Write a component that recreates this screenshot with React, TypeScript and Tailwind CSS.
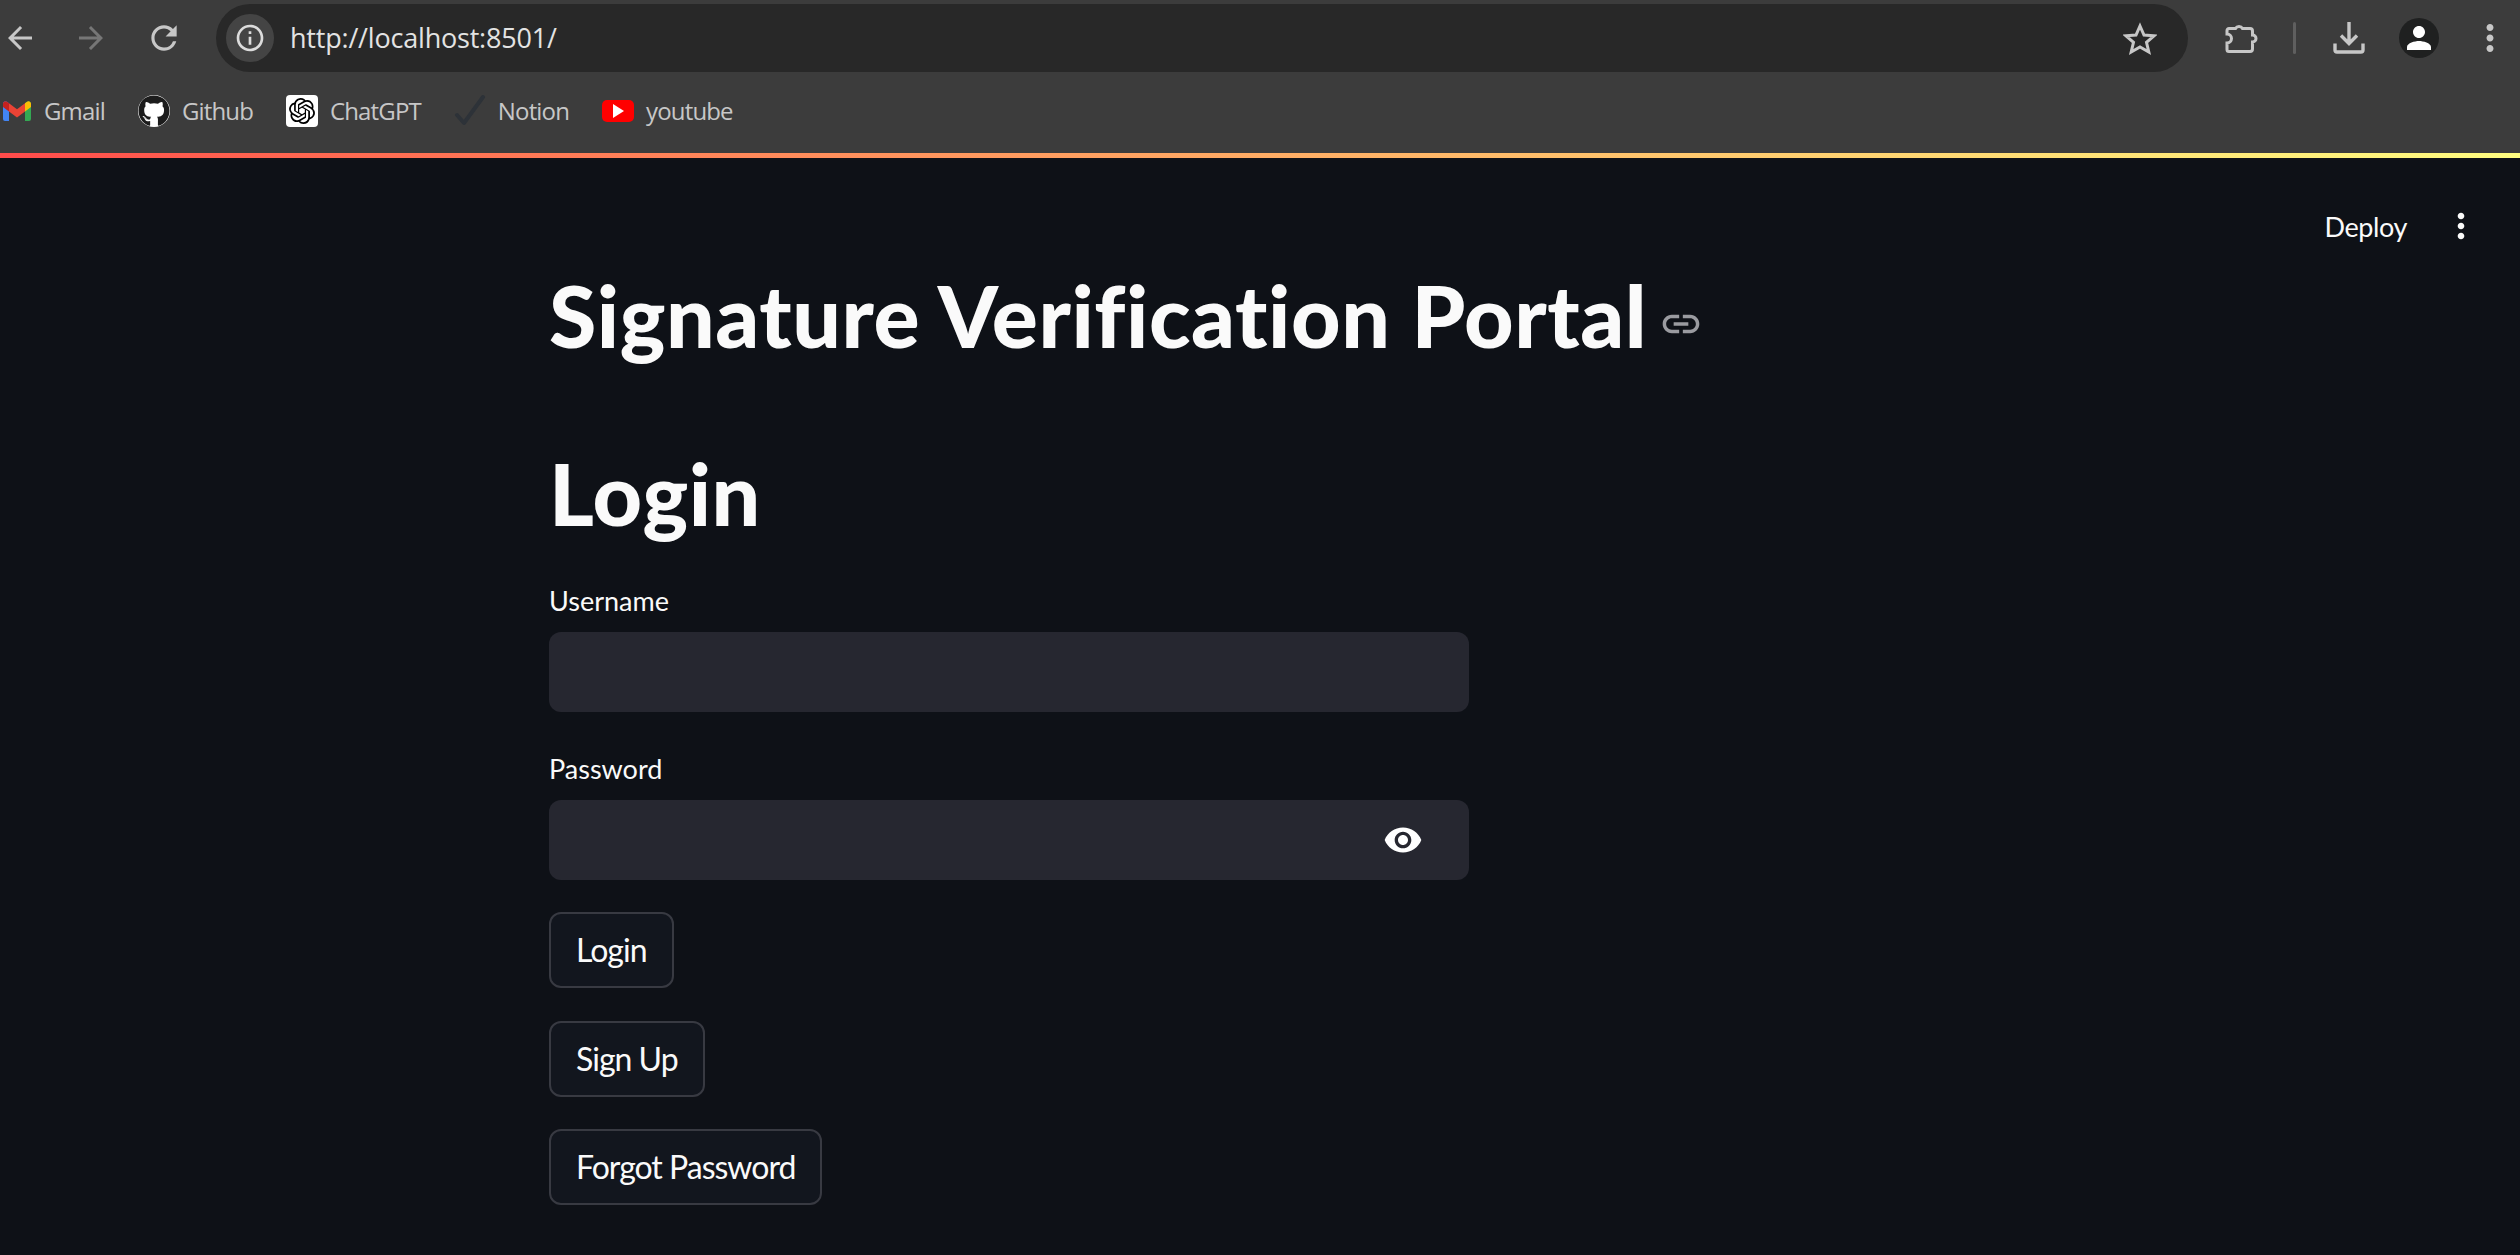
import React from "react";
import { MdArrowBack, MdArrowForward, MdRefresh, MdInfoOutline, MdPerson, MdMoreVert, MdVisibility, MdLink } from "react-icons/md";
import { FaGithub } from "react-icons/fa";
import { SiOpenai } from "react-icons/si";

const Gmail = () => (
  <svg width="30" height="22" viewBox="0 0 30 22" className="shrink-0">
    <path d="M1 21V3.5C1 1.5 3.5.4 5 1.7L7 3.3V21H3a2 2 0 0 1-2-2z" fill="#4285f4" />
    <path d="M23 21V3.3l2-1.6C26.5.4 29 1.5 29 3.5V19a2 2 0 0 1-2 2z" fill="#34a853" />
    <path d="M23 3.3 25 1.7C26.5.4 29 1.5 29 3.5V7l-6 4.5z" fill="#fbbc04" />
    <path d="M7 11.5V3.3L15 9.3l8-6v8.2L15 17.4z" fill="#ea4335" />
    <path d="M1 3.5C1 1.5 3.5.4 5 1.7L7 3.3v8.2L1 7z" fill="#c5221f" />
  </svg>
);

const Bookmark = ({ icon, label, gap = "gap-3" }: { icon: React.ReactNode; label: string; gap?: string }) => (
  <div className={`flex items-center ${gap}`}>
    {icon}
    <span className="text-[24px] leading-none tracking-[-0.85px] text-[#c7c7c7] font-['Open_Sans',sans-serif]">{label}</span>
  </div>
);

const Button = ({ label }: { label: string }) => (
  <button className="h-[76px] self-start rounded-[12px] border-2 border-[#383a42] bg-[#12161e] px-[25px] text-[32px] leading-none tracking-[-1px] text-[#fafafa]">
    {label}
  </button>
);

const Field = ({ label, children }: { label: string; children?: React.ReactNode }) => (
  <div className="flex flex-col">
    <label className="h-[38px] text-[27px] leading-[28px] text-[#fafafa]">{label}</label>
    <div className="mt-[7px] flex h-[80px] w-[920px] items-center justify-end rounded-[12px] bg-[#262730] pr-[46px]">{children}</div>
  </div>
);

export default function App() {
  return (
    <div className="flex h-[1255px] w-[2520px] flex-col overflow-hidden bg-[#0e1117] font-['Lato',sans-serif]">
      <header className="h-[153px] shrink-0 bg-[#3c3c3c]">
        <div className="flex h-[76px] items-center">
          <div className="flex w-[216px] items-center text-[#c7c7c7]">
            <MdArrowBack size={36} className="ml-[2px]" />
            <MdArrowForward size={36} className="ml-[35px] text-[#767676]" />
            <MdRefresh size={38} className="ml-[36px]" />
          </div>
          <div className="flex h-[68px] w-[1972px] items-center rounded-full bg-[#282828] pl-[10px] pr-[31px]">
            <div className="flex h-[48px] w-[48px] items-center justify-center rounded-full bg-[#444444]">
              <MdInfoOutline size={32} className="text-[#dcdcdc]" />
            </div>
            <span className="ml-[16px] text-[27px] tracking-[-0.2px] text-[#e3e3e3] font-['Open_Sans',sans-serif]">http://localhost:8501/</span>
            <svg width="34" height="33" viewBox="0 0 34 33" fill="none" stroke="#c7c7c7" strokeWidth="3" className="ml-auto">
              <polygon points="17,4 21,13 31,13.8 23.5,20.4 25.8,30 17,25 8.2,30 10.5,20.4 3,13.8 13,13" />
            </svg>
          </div>
          <div className="flex flex-1 items-center text-[#c7c7c7]">
            <svg width="33" height="33" viewBox="0 0 33 33" fill="none" stroke="#c7c7c7" strokeWidth="3" className="ml-[37px]">
              <path d="M4 6.5h6.5a4 4 0 0 1 7 0H25a2.5 2.5 0 0 1 2.5 2.5v4a3.5 3.5 0 0 1 0 7v7a2.5 2.5 0 0 1-2.5 2.5H4a2 2 0 0 1-2-2v-6.5a4.5 4.5 0 0 0 0-9V8.500a2 2 0 0 1 2-2z" />
            </svg>
            <div className="ml-[35px] h-[32px] w-[3px] rounded bg-[#5f5f5f]" />
            <svg width="32" height="32" viewBox="0 0 32 32" fill="none" stroke="#c7c7c7" strokeWidth="3.4" className="ml-[37px]">
              <path d="M16 0v21M8 13.500l8 8 8-8M2 21.500V28a2 2 0 0 0 2 2h24a2 2 0 0 0 2-2v-6.500" />
            </svg>
            <div className="ml-[34px] flex h-[40px] w-[40px] items-center justify-center rounded-full bg-[#1f2020]">
              <MdPerson size={36} className="text-white" />
            </div>
            <MdMoreVert size={42} className="ml-[30px]" />
          </div>
        </div>
        <div className="mt-[8px] flex h-[54px] items-center gap-[33px] pl-[2px]">
          <Bookmark icon={<Gmail />} label="Gmail" gap="gap-[12px]" />
          <Bookmark icon={<span className="flex h-[32px] w-[32px] items-center justify-center rounded-full bg-white"><FaGithub size={32} className="text-[#1c1c1c]" /></span>} label="Github" />
          <Bookmark icon={<span className="flex h-[32px] w-[32px] items-center justify-center rounded-[4px] bg-white"><SiOpenai size={26} className="text-black" /></span>} label="ChatGPT" />
          <Bookmark
            icon={
              <svg width="32" height="32" viewBox="0 0 32 32" fill="none" stroke="#2d3238" strokeWidth="4" strokeLinecap="round" strokeLinejoin="round">
                <path d="M3 20l7 8L29 2" />
              </svg>
            }
            label="Notion"
          />
          <Bookmark
            icon={
              <span className="flex h-[22px] w-[32px] items-center justify-center rounded-[5px] bg-[#ff0000]">
                <svg width="12" height="14" viewBox="0 0 12 14"><path d="M1 0l11 7-11 7z" fill="#fff" /></svg>
              </span>
            }
            label="youtube"
          />
        </div>
      </header>
      <div className="h-[5px] shrink-0 bg-gradient-to-r from-[#ff4b4b] to-[#fffd80]" />

      <main className="relative flex-1 pl-[549px] pt-[102px]">
        <div className="absolute right-[39px] top-[48px] flex items-center gap-[34px] text-[#fafafa]">
          <span className="text-[27px] leading-none tracking-[-0.4px]">Deploy</span>
          <MdMoreVert size={40} />
        </div>

        <div className="flex h-[110px] items-center gap-[12px]">
          <h1 className="text-[86px] font-black leading-none tracking-[0.55px] text-[#fafafa]">Signature Verification Portal</h1>
          <MdLink size={44} className="mt-[18px] text-[#9a9ba0]" />
        </div>

        <h1 className="mt-[68px] text-[86px] font-black leading-[110px] tracking-[0.55px] text-[#fafafa]">Login</h1>

        <div className="mt-[39px] flex flex-col gap-[43px]">
          <Field label="Username" />
          <Field label="Password">
            <MdVisibility size={40} className="text-white" />
          </Field>
        </div>

        <div className="mt-[32px] flex flex-col gap-[32.5px]">
          <Button label="Login" />
          <Button label="Sign Up" />
          <Button label="Forgot Password" />
        </div>
      </main>
    </div>
  );
}
